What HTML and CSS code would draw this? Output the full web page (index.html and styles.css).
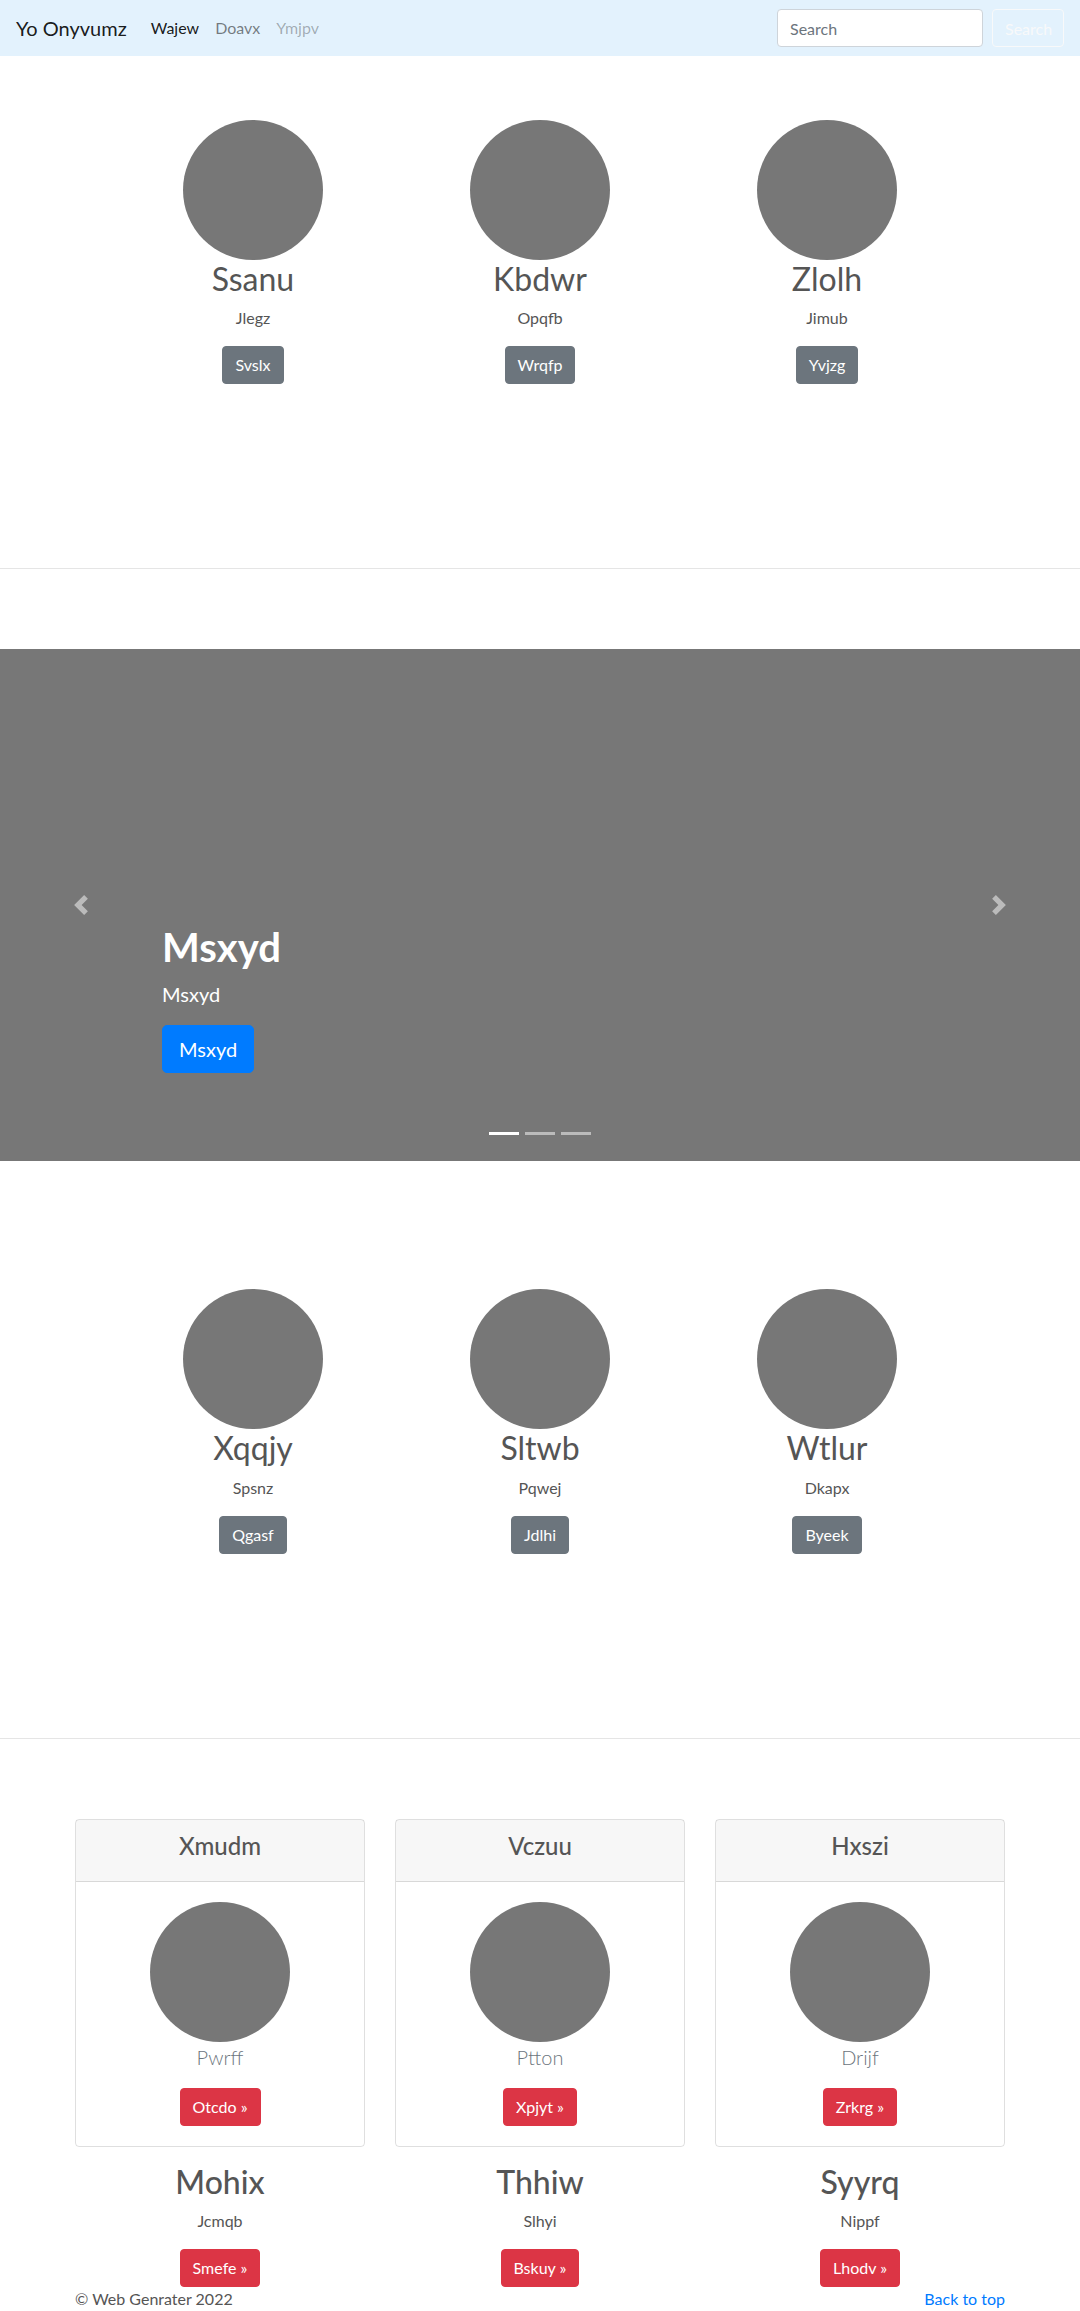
FILE: index.html
```html
<!DOCTYPE html>
<html lang="en">
<head>
<meta charset="utf-8">
<title>Yo Onyvumz</title>
<link rel="stylesheet" href="styles.css">
</head>
<body>
<nav class="navbar">
  <a class="brand" href="#">Yo Onyvumz</a>
  <ul class="nav-links">
    <li><a class="nav-link active" href="#">Wajew</a></li>
    <li><a class="nav-link" href="#">Doavx</a></li>
    <li><a class="nav-link disabled" href="#">Ymjpv</a></li>
  </ul>
  <form class="search-form">
    <input class="search-input" type="text" placeholder="Search">
    <button class="search-btn" type="button">Search</button>
  </form>
</nav>

<section class="team">
  <div class="team-grid">
    <div class="member">
      <div class="avatar"></div>
      <h2 class="member-name">Ssanu</h2>
      <p class="member-role">Jlegz</p>
      <a class="btn btn-secondary" href="#">Svslx</a>
    </div>
    <div class="member">
      <div class="avatar"></div>
      <h2 class="member-name">Kbdwr</h2>
      <p class="member-role">Opqfb</p>
      <a class="btn btn-secondary" href="#">Wrqfp</a>
    </div>
    <div class="member">
      <div class="avatar"></div>
      <h2 class="member-name">Zlolh</h2>
      <p class="member-role">Jimub</p>
      <a class="btn btn-secondary" href="#">Yvjzg</a>
    </div>
  </div>
</section>

<hr class="divider">

<div class="carousel">
  <a class="carousel-control prev" href="#">
    <svg class="control-icon" viewBox="0 0 8 8" width="20" height="20"><path d="M5.25 0l-4 4 4 4 1.5-1.5L4.25 4l2.5-2.5L5.25 0z"/></svg>
  </a>
  <a class="carousel-control next" href="#">
    <svg class="control-icon" viewBox="0 0 8 8" width="20" height="20"><path d="M2.75 0l-1.5 1.5L3.75 4l-2.5 2.5L2.75 8l4-4-4-4z"/></svg>
  </a>
  <div class="carousel-caption">
    <h1 class="caption-title">Msxyd</h1>
    <p class="caption-text">Msxyd</p>
    <a class="btn btn-lg btn-primary" href="#">Msxyd</a>
  </div>
  <ol class="indicators">
    <li class="active"></li>
    <li></li>
    <li></li>
  </ol>
</div>

<section class="team">
  <div class="team-grid">
    <div class="member">
      <div class="avatar"></div>
      <h2 class="member-name">Xqqjy</h2>
      <p class="member-role">Spsnz</p>
      <a class="btn btn-secondary" href="#">Qgasf</a>
    </div>
    <div class="member">
      <div class="avatar"></div>
      <h2 class="member-name">Sltwb</h2>
      <p class="member-role">Pqwej</p>
      <a class="btn btn-secondary" href="#">Jdlhi</a>
    </div>
    <div class="member">
      <div class="avatar"></div>
      <h2 class="member-name">Wtlur</h2>
      <p class="member-role">Dkapx</p>
      <a class="btn btn-secondary" href="#">Byeek</a>
    </div>
  </div>
</section>

<hr class="divider">

<div class="container">
  <div class="card-grid">
    <div class="card">
      <div class="card-header"><h4 class="card-title">Xmudm</h4></div>
      <div class="card-body">
        <div class="avatar"></div>
        <p class="lead">Pwrff</p>
        <a class="btn btn-danger" href="#">Otcdo »</a>
      </div>
    </div>
    <div class="card">
      <div class="card-header"><h4 class="card-title">Vczuu</h4></div>
      <div class="card-body">
        <div class="avatar"></div>
        <p class="lead">Ptton</p>
        <a class="btn btn-danger" href="#">Xpjyt »</a>
      </div>
    </div>
    <div class="card">
      <div class="card-header"><h4 class="card-title">Hxszi</h4></div>
      <div class="card-body">
        <div class="avatar"></div>
        <p class="lead">Drijf</p>
        <a class="btn btn-danger" href="#">Zrkrg »</a>
      </div>
    </div>
  </div>

  <div class="feature-grid">
    <div class="feature">
      <h2 class="feature-title">Mohix</h2>
      <p class="feature-text">Jcmqb</p>
      <a class="btn btn-danger" href="#">Smefe »</a>
    </div>
    <div class="feature">
      <h2 class="feature-title">Thhiw</h2>
      <p class="feature-text">Slhyi</p>
      <a class="btn btn-danger" href="#">Bskuy »</a>
    </div>
    <div class="feature">
      <h2 class="feature-title">Syyrq</h2>
      <p class="feature-text">Nippf</p>
      <a class="btn btn-danger" href="#">Lhodv »</a>
    </div>
  </div>

  <footer class="footer">
    <p class="copyright">© Web Genrater 2022</p>
    <a class="back-top" href="#">Back to top</a>
  </footer>
</div>
</body>
</html>
```

FILE: styles.css
```css
* {
  box-sizing: border-box;
}

body {
  margin: 0;
  font-family: Lato, "Open Sans", "Liberation Sans", sans-serif;
  font-size: 16px;
  line-height: 1.5;
  color: #555555;
  background: #ffffff;
}

a {
  text-decoration: none;
}

/* Navbar */
.navbar {
  display: flex;
  align-items: center;
  height: 56px;
  padding: 8px 16px;
  background: #e3f2fd;
}

.brand {
  font-size: 20px;
  line-height: 30px;
  padding: 5px 0;
  margin-right: 16px;
  color: rgba(0, 0, 0, 0.9);
}

.nav-links {
  display: flex;
  list-style: none;
  margin: 0;
  padding: 0;
}

.nav-link {
  display: block;
  padding: 8px;
  line-height: 24px;
  color: rgba(0, 0, 0, 0.5);
}

.nav-link.active {
  color: rgba(0, 0, 0, 0.9);
}

.nav-link.disabled {
  color: rgba(0, 0, 0, 0.3);
}

.search-form {
  display: flex;
  align-items: center;
  margin-left: auto;
}

.search-input {
  width: 206px;
  height: 38px;
  padding: 6px 12px;
  margin-right: 9px;
  font-family: inherit;
  font-size: 16px;
  color: #495057;
  background: #ffffff;
  border: 1px solid #ced4da;
  border-radius: 4px;
}

.search-input::placeholder {
  color: #6c757d;
}

.search-btn {
  width: 72px;
  height: 38px;
  padding: 6px 12px;
  font-family: inherit;
  font-size: 16px;
  color: #f8f9fa;
  background: transparent;
  border: 1px solid #f8f9fa;
  border-radius: 4px;
}

/* Team sections */
.team {
  padding: 64px 0 80px;
}

.team-grid {
  width: 861px;
  margin: 0 auto;
  display: grid;
  grid-template-columns: repeat(3, 1fr);
}

.member {
  text-align: center;
  margin-bottom: 24px;
}

.avatar {
  width: 140px;
  height: 140px;
  margin: 0 auto;
  border-radius: 50%;
  background: #777777;
}

.member-name {
  margin: 0 0 8px;
  font-size: 32px;
  line-height: 38.4px;
  font-weight: 400;
}

.member-role,
.feature-text {
  margin: 0 0 16px;
}

/* Buttons */
.btn {
  display: inline-block;
  padding: 6px 12px;
  font-size: 16px;
  line-height: 24px;
  border: 1px solid transparent;
  border-radius: 4px;
  color: #ffffff;
}

.btn-secondary {
  background: #6c757d;
  border-color: #6c757d;
}

.btn-danger {
  background: #dc3545;
  border-color: #dc3545;
}

.btn-primary {
  background: #007bff;
  border-color: #007bff;
}

.btn-lg {
  padding: 8px 16px;
  font-size: 20px;
  line-height: 30px;
  border-radius: 5px;
}

.divider {
  margin: 80px 0;
  border: 0;
  border-top: 1px solid rgba(0, 0, 0, 0.1);
}

/* Carousel */
.carousel {
  position: relative;
  height: 512px;
  margin-bottom: 64px;
  background: #777777;
}

.carousel-control {
  position: absolute;
  top: 0;
  bottom: 0;
  width: 15%;
  display: flex;
  align-items: center;
  justify-content: center;
  opacity: 0.5;
}

.carousel-control.prev {
  left: 0;
}

.carousel-control.next {
  right: 0;
}

.control-icon {
  fill: #ffffff;
}

.carousel-caption {
  position: absolute;
  left: 15%;
  right: 15%;
  bottom: 68px;
  padding: 20px 0;
  color: #ffffff;
  text-align: left;
}

.carousel-caption .btn {
  vertical-align: top;
}

.caption-title {
  margin: 0 0 8px;
  font-size: 40px;
  line-height: 48px;
  font-weight: 700;
}

.caption-text {
  margin: 0 0 16px;
  font-size: 20px;
  line-height: 30px;
}

.indicators {
  position: absolute;
  left: 0;
  right: 0;
  bottom: 0;
  margin: 0 15% 16px;
  padding: 0;
  display: flex;
  justify-content: center;
  list-style: none;
}

.indicators li {
  width: 30px;
  height: 3px;
  margin: 0 3px;
  box-sizing: content-box;
  background: #ffffff;
  background-clip: padding-box;
  border-top: 10px solid transparent;
  border-bottom: 10px solid transparent;
  opacity: 0.5;
}

.indicators li.active {
  opacity: 1;
}

/* Cards */
.container {
  width: 960px;
  margin: 0 auto;
  padding: 0 15px;
}

.card-grid,
.feature-grid {
  display: grid;
  grid-template-columns: repeat(3, 1fr);
  column-gap: 30px;
}

.card {
  text-align: center;
  border: 1px solid rgba(0, 0, 0, 0.125);
  border-radius: 4px;
  margin-bottom: 16px;
}

.card-header {
  padding: 12px 20px;
  background: rgba(0, 0, 0, 0.03);
  border-bottom: 1px solid rgba(0, 0, 0, 0.125);
}

.card-title {
  margin: 0 0 8px;
  font-size: 24px;
  line-height: 28.8px;
  font-weight: 500;
}

.card-body {
  padding: 20px;
}

.lead {
  margin: 0 0 16px;
  font-size: 20px;
  line-height: 30px;
  font-weight: 300;
  color: #6c757d;
}

.feature {
  text-align: center;
}

.feature-title {
  margin: 0 0 8px;
  font-size: 32px;
  line-height: 38.4px;
  font-weight: 500;
}

/* Footer */
.footer {
  display: flex;
  justify-content: space-between;
}

.copyright {
  margin: 0;
}

.back-top {
  color: #007bff;
}
```
